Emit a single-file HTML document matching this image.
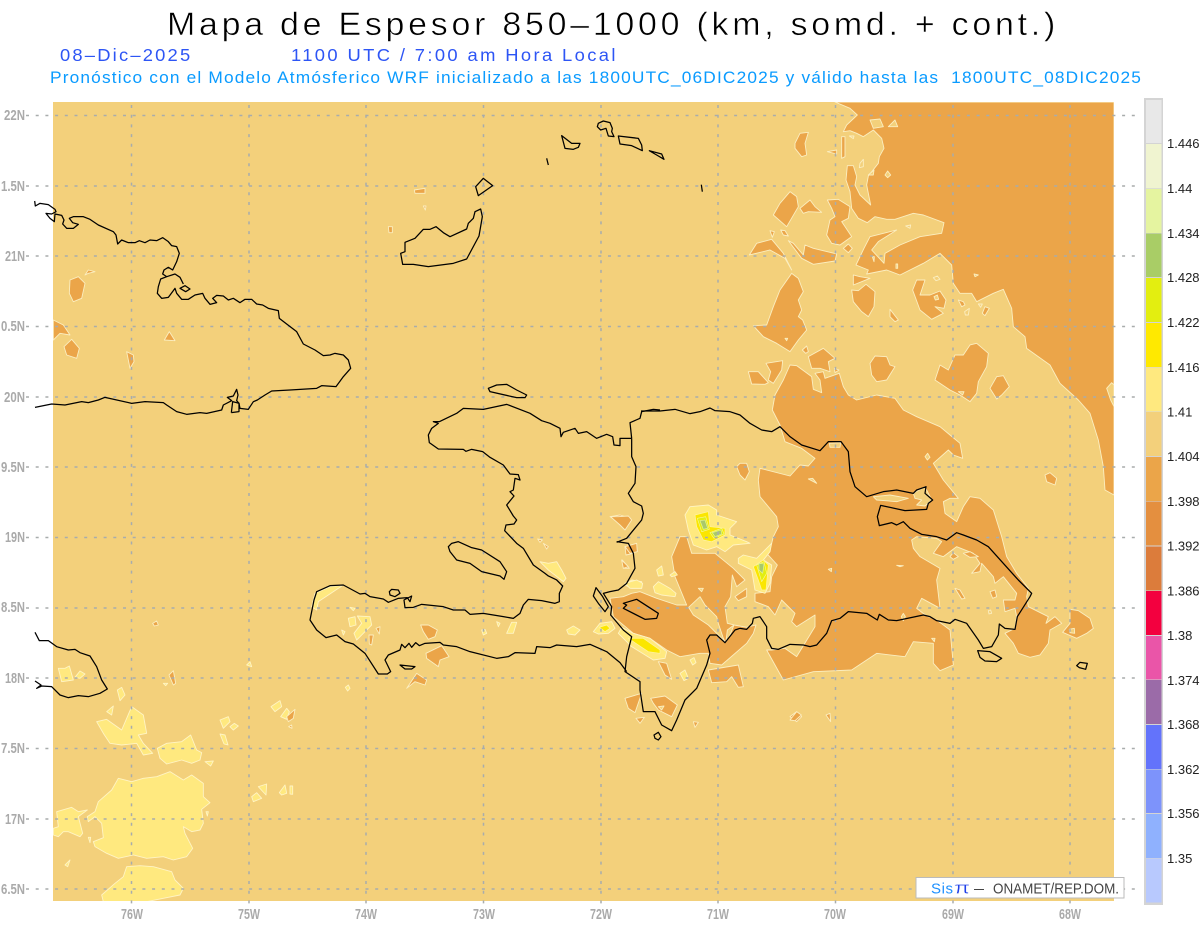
<!DOCTYPE html>
<html><head><meta charset="utf-8"><title>Mapa de Espesor</title>
<style>
html,body{margin:0;padding:0;background:#fff;width:1200px;height:927px;overflow:hidden}
svg{display:block;font-family:"Liberation Sans",sans-serif}
polygon,polyline,line,path{vector-effect:non-scaling-stroke;stroke-linejoin:round}
.dk polygon{fill:#eba549;stroke:#fbeec0;stroke-width:.9}
.lt polygon{fill:#f3d07b;stroke:#fbeec0;stroke-width:.9}
.yl polygon{fill:#ffe97f;stroke:#fff4c4;stroke-width:.9}
.dy polygon{fill:#fbe600;stroke:#fff4a0;stroke-width:.7}
.yg polygon{fill:#e3ee10;stroke:#f6f6a0;stroke-width:.6}
.gr polygon{fill:#a9c96a;stroke:#e5f4a0;stroke-width:.6}
.cs polyline,.cs polygon{fill:none;stroke:#000;stroke-width:1.25}
.grid line{stroke:#a8acac;stroke-width:1.5;stroke-dasharray:3 6.7}
.ax text{font-size:14.5px;font-weight:bold;fill:#aaa}
.cb text{font-size:13px;fill:#222}
</style></head><body>
<svg width="1200" height="927" viewBox="0 0 1200 927" xmlns="http://www.w3.org/2000/svg">
<defs><clipPath id="m"><rect x="53" y="102" width="1061" height="799"/></clipPath></defs>
<text transform="translate(167 35) scale(1.06 1)" font-size="32" textLength="838" lengthAdjust="spacing" fill="#000" stroke="#fff" stroke-width=".5">Mapa de Espesor 850–1000 (km, somd. + cont.)</text>
<text transform="translate(60 61) scale(1.05 1)" font-size="17.5" textLength="124" lengthAdjust="spacing" fill="#2d55f5">08–Dic–2025</text>
<text transform="translate(291 61) scale(1.05 1)" font-size="17.5" textLength="309" lengthAdjust="spacing" fill="#2d55f5">1100 UTC / 7:00 am Hora Local</text>
<text transform="translate(50 83) scale(1.05 1)" font-size="16.5" textLength="1039" lengthAdjust="spacing" fill="#0a9bff" xml:space="preserve">Pronóstico con el Modelo Atmósferico WRF inicializado a las 1800UTC_06DIC2025 y válido hasta las  1800UTC_08DIC2025</text>

<g clip-path="url(#m)">
<rect x="53" y="102" width="1061" height="799" fill="#f3d07b"/>

<!-- NE area (zoom 8 coordinates) -->
<g transform="translate(740 100) scale(.33333)">
<g class="dk">
<polygon points="285,6 330,25 352,45 320,75 310,95 330,92 350,100 370,110 400,90 425,115 432,145 418,170 415,190 385,228 380,255 392,315 360,285 345,255 350,230 340,197 322,197 318,240 330,275 335,325 355,355 382,368 405,350 440,358 465,358 520,340 550,345 612,368 605,400 540,410 480,435 435,460 432,490 395,450 415,425 470,390 390,410 372,445 348,495 385,510 380,522 440,510 480,525 550,490 600,460 635,495 640,550 660,580 695,580 710,605 760,580 790,568 815,625 820,680 855,710 860,745 930,795 960,850 1015,900 1050,940 1075,1020 1090,1100 1095,1170 1122,1185 1122,6"/>
<polygon points="165,130 180,100 205,97 195,130 200,165 185,170 165,145"/>
<polygon points="305,110 315,110 315,170 305,175"/>
<polygon points="262,155 290,150 290,162"/>
<polygon points="262,300 295,298 330,320 325,355 305,365 335,410 300,435 275,430 260,405 270,360 285,350 275,325"/>
<polygon points="150,275 170,290 175,320 140,380 100,345 120,310"/>
<polygon points="180,325 210,300 225,320 245,337 205,335 190,340"/>
<polygon points="28,465 50,430 95,418 130,460 155,510 135,475 90,450"/>
<polygon points="145,422 160,430 190,465 195,435 220,445 290,462 285,483 220,493 185,475"/>
<polygon points="90,392 103,395 97,412"/>
<polygon points="122,390 135,392 145,408 130,405"/>
<polygon points="310,445 325,432 337,445 325,458"/>
<polygon points="155,520 175,535 190,575 175,600 185,630 175,650 188,660 200,690 175,720 150,755 110,730 70,710 40,677 80,675 100,620 120,570"/>
<polygon points="340,525 360,530 390,535 365,545 340,555"/>
<polygon points="335,570 355,572 378,553 405,575 402,620 385,650 365,635 340,605"/>
<polygon points="450,628 475,660 465,665 450,650"/>
<polygon points="518,570 530,540 555,540 540,585 570,585 600,573 618,600 612,625 585,620 610,640 575,658 540,630"/>
<polygon points="390,790 405,768 440,770 450,795 465,800 440,840 410,845 395,825"/>
<polygon points="585,840 600,795 625,810 645,765 670,765 690,735 710,730 745,760 740,800 715,845 710,880 690,905 660,885 630,870"/>
<polygon points="750,865 770,830 790,827 808,860 785,885 770,897"/>
<polygon points="187,750 200,738 205,755 197,760"/>
<polygon points="205,770 250,745 285,775 265,785 270,815 240,805 215,805"/>
<polygon points="25,815 55,815 85,848 75,853 35,852"/>
<polygon points="78,790 128,782 125,810 100,850 85,840 92,815"/>
<polygon points="655,600 670,605 675,615 665,620"/>
<polygon points="735,620 748,625 735,647 727,640"/>
<polygon points="283,805 297,810 285,818"/>
<polygon points="285,895 300,890 302,905 290,910"/>
</g>
<g class="lt">
<polygon points="390,60 420,57 430,80 400,85"/>
<polygon points="445,80 465,60 473,80"/>
<polygon points="435,225 443,213 452,225 443,233"/>
<polygon points="497,378 512,375 510,385"/>
<polygon points="468,492 473,492 473,505 468,505"/>
<polygon points="397,470 403,470 402,485"/>
<polygon points="580,533 592,528 600,538 588,542"/>
<polygon points="582,590 592,585 596,598 586,600"/>
<polygon points="702,522 715,525 705,530"/>
<polygon points="360,190 370,178 370,200 358,203"/>
<polygon points="385,225 402,210 400,225"/>
<polygon points="328,108 342,108 340,116"/>
<polygon points="674,635 688,625 685,645 676,645"/>
<polygon points="715,612 727,612 722,622"/>
<polygon points="135,715 143,715 140,722"/>
<polygon points="655,875 672,875 668,885"/>
<polygon points="1100,865 1115,848 1122,855 1122,920 1112,900"/>
</g>
</g>

<!-- central dark (zoom 9 coordinates) -->
<g transform="translate(740 400) scale(.33333)">
<g class="dk">
<polygon points="97,30 105,-15 130,-60 150,-105 170,-103 215,-70 220,-32 245,-22 240,-60 225,-80 250,-85 255,-65 298,-80 310,-40 325,-15 350,0 410,-15 465,-5 490,30 530,50 600,80 630,105 660,130 668,175 640,165 625,150 580,190 610,240 655,295 630,295 610,305 615,340 650,365 670,320 690,290 720,295 760,330 785,410 800,470 830,520 865,565 860,590 865,620 925,650 918,670 945,650 965,670 930,690 925,730 900,765 870,772 835,760 820,730 795,700 825,685 830,650 825,625 795,635 790,600 825,600 830,580 790,530 765,550 760,530 725,490 720,515 695,520 720,490 700,460 650,440 610,470 580,460 605,425 590,415 530,410 515,420 520,445 540,470 600,505 590,540 600,625 545,595 530,625 560,648 590,660 630,690 640,795 600,812 580,790 580,730 520,725 495,770 410,760 335,810 220,815 130,840 80,750 95,750 135,745 170,770 225,680 225,645 170,680 155,665 165,640 125,600 105,645 85,620 45,605 45,580 90,575 95,530 112,495 80,460 95,430 100,410 115,380 110,350 60,290 55,240 60,205 150,228 180,195 205,198 225,175 185,145 135,125 120,75"/>
<polygon points="968,697 990,670 990,628 1015,632 1050,655 1060,685 1040,700 1010,715"/>
<polygon points="915,225 930,218 950,235 945,255 920,245"/>
<polygon points="0,190 20,190 28,215 15,240 0,225 -10,200"/>
<polygon points="150,950 170,935 185,950 170,965"/>
<polygon points="258,945 270,940 272,965"/>
<polygon points="645,565 660,570 675,595 665,597"/>
<polygon points="630,470 640,458 655,470 640,478"/>
<polygon points="670,460 690,455 715,470 690,472"/>
<polygon points="750,575 765,570 770,590 758,595"/>
</g>
<g class="lt">
<polygon points="400,290 450,285 505,295 470,305 410,300"/>
<polygon points="520,280 555,260 575,300 555,318 530,315 545,300 525,295"/>
<polygon points="268,130 302,128 300,142 270,142"/>
<polygon points="205,237 218,235 230,250"/>
<polygon points="470,496 490,497 480,500"/>
<polygon points="555,170 563,160 570,172 562,180"/>
<polygon points="484,650 490,640 496,650 490,662"/>
<polygon points="745,632 752,630 755,640 747,642"/>
<polygon points="988,688 1003,685 1004,700 990,698"/>
<polygon points="575,715 585,715 583,725"/>
<polygon points="265,508 275,505 274,515"/>
</g>
</g>

<!-- west-central (zoom 5 coordinates) -->
<g transform="translate(590 490) scale(.33333)">
<g class="dk">
<polygon points="245,200 270,140 290,140 305,190 375,190 430,235 465,270 440,290 427,255 422,320 405,350 412,400 432,405 470,412 498,405 490,430 470,460 395,525 360,520 355,490 330,490 270,500 230,480 180,445 130,430 70,380 60,325 100,320 125,310 150,305 200,325 260,345 290,345 255,260"/>
<polygon points="60,80 90,75 122,85 105,115 92,105 75,90"/>
<polygon points="105,170 140,165 130,190 108,195"/>
<polygon points="97,210 118,235 102,235"/>
<polygon points="205,515 230,520 245,568 225,555"/>
<polygon points="355,540 445,525 460,590 445,592 425,560 410,575 365,578"/>
<polygon points="105,625 155,610 135,668 115,655"/>
<polygon points="182,625 225,618 262,645 245,680 205,660 190,640"/>
<polygon points="138,685 163,682 150,700"/>
<polygon points="310,695 325,697 315,712"/>
<polygon points="600,690 620,665 634,675 615,692"/>
<polygon points="435,320 470,295 470,320 445,332"/>
</g>
<g class="lt">
<polygon points="296,352 330,320 345,345 380,380 385,400 400,445 405,455 390,440 355,405 310,375"/>
<polygon points="432,405 418,440 408,455 412,420"/>
<polygon points="325,295 340,295 335,305"/>
<polygon points="205,650 222,648 215,660"/>
</g>
<g class="yl">
<polygon points="285,75 300,50 355,45 380,60 380,75 440,95 420,115 420,135 470,155 480,160 430,165 405,185 380,170 350,180 310,165 295,120"/>
<polygon points="445,205 460,195 500,205 545,160 540,185 520,210 545,225 540,280 525,310 495,300 485,240 445,220"/>
<polygon points="10,425 30,400 65,395 75,415 55,430 25,432"/>
<polygon points="85,430 95,412 130,430 180,445 230,485 225,505 190,510 125,470"/>
<polygon points="105,285 125,270 155,275 155,295 125,295"/>
<polygon points="190,290 205,275 240,295 258,310 255,320 215,315 195,308"/>
<polygon points="200,240 215,228 220,255 205,258"/>
<polygon points="240,255 255,245 262,255 245,260"/>
<polygon points="300,510 312,503 318,518 308,525"/>
<polygon points="270,550 285,540 295,565 282,572"/>
</g>
<g class="dy">
<polygon points="315,75 355,65 360,110 405,115 405,135 365,155 340,150 320,110"/>
<polygon points="490,230 520,210 535,225 528,300 515,300 505,270"/>
<polygon points="28,412 50,405 60,415 45,425"/>
<polygon points="115,445 160,445 210,480 210,490 175,485"/>
</g>
<g class="yg">
<polygon points="322,85 347,80 358,118 335,125"/>
<polygon points="360,128 395,115 402,132 372,145"/>
<polygon points="500,225 522,215 530,250 515,275"/>
</g>
<g class="gr">
<polygon points="330,92 345,90 353,115 340,118"/>
<polygon points="367,128 393,120 395,132 375,140"/>
<polygon points="507,220 522,222 518,250 507,240"/>
</g>
</g>

<!-- Haiti area contours (zoom 7 coordinates) -->
<g transform="translate(300 370) scale(.33333)">
<g class="dk">
<polygon points="932,440 955,440 985,438 995,450 975,480 960,465"/>
<polygon points="975,530 1010,520 1012,545 990,550"/>
<polygon points="965,570 985,590 970,595"/>
<polygon points="362,765 385,765 412,780 405,800 385,808 370,785"/>
<polygon points="378,850 425,827 447,860 420,870 415,890 380,865"/>
<polygon points="320,955 350,910 380,930 375,945 345,935"/>
<polygon points="207,795 220,795 215,825 208,822"/>
<polygon points="228,775 240,770 238,792"/>
<polygon points="713,507 727,510 720,517"/>
<polygon points="730,520 745,530 740,537"/>
</g>
<g class="yl">
<polygon points="720,575 745,580 770,575 785,600 798,625 790,635 745,600"/>
<polygon points="45,670 90,650 130,645 85,675 55,695 50,720 35,710"/>
<polygon points="145,745 165,740 168,765 150,770"/>
<polygon points="172,738 210,740 215,765 190,790 170,810 162,790 185,760"/>
<polygon points="620,790 635,757 650,757 640,790"/>
<polygon points="545,780 555,778 560,790 550,795"/>
<polygon points="590,755 600,760 595,770"/>
<polygon points="800,780 820,768 840,780 825,795 805,792"/>
<polygon points="975,640 1010,630 1028,640 1025,655 990,655"/>
<polygon points="125,780 135,785 130,795"/>
<polygon points="150,712 165,715 160,722"/>
<polygon points="136,952 145,945 150,955 143,963"/>
</g>
</g>

<!-- SW contours (zoom 6 coordinates) -->
<g transform="translate(0 600) scale(.33333)">
<g class="yl">
<polygon points="335,570 355,535 395,545 430,535 470,530 510,515 550,540 575,525 610,550 610,590 630,608 605,628 610,670 600,690 575,695 550,680 555,700 578,745 560,770 520,780 490,770 440,775 400,765 355,775 320,760 285,740 280,725 310,713 305,670 285,650 265,665 262,650 285,635 295,605"/>
<polygon points="160,685 175,680 170,635 215,622 235,635 262,630 235,650 248,700 240,710 205,695 190,695 175,710 160,705"/>
<polygon points="305,885 345,850 370,830 380,800 420,797 460,800 515,815 525,840 550,865 540,885 490,895 440,905 310,905"/>
<polygon points="290,365 320,358 365,390 395,320 430,345 440,400 415,405 430,430 458,460 430,465 410,430 365,435 330,430 310,400"/>
<polygon points="472,445 500,430 545,425 572,405 590,450 605,458 600,480 575,490 545,480 500,492 480,475"/>
<polygon points="175,205 195,205 208,198 220,240 185,245"/>
<polygon points="225,232 240,213 255,222 240,235"/>
<polygon points="352,270 365,262 375,285 360,302"/>
<polygon points="320,335 340,318 335,345"/>
<polygon points="660,360 685,350 690,365 670,385"/>
<polygon points="690,380 703,370 715,378 700,390"/>
<polygon points="660,402 675,405 684,435 672,432"/>
<polygon points="755,590 770,578 785,595 760,605"/>
<polygon points="775,560 800,552 798,585"/>
<polygon points="838,578 855,555 860,580 845,585"/>
<polygon points="870,558 878,558 878,583 870,582"/>
<polygon points="813,320 840,302 845,320 825,335"/>
<polygon points="842,350 860,325 868,335 860,358"/>
<polygon points="615,485 640,483 632,498"/>
<polygon points="195,795 210,780 203,800"/>
<polygon points="740,195 750,185 755,200"/>
<polygon points="618,635 625,635 622,648"/>
<polygon points="265,712 272,712 270,728"/>
<polygon points="490,250 503,250 497,257"/>
</g>
<g class="dk">
<polygon points="507,225 520,212 527,250 520,255"/>
<polygon points="860,350 885,328 880,355 865,365"/>
<polygon points="458,70 470,63 475,75 463,78"/>
<polygon points="866,380 875,375 876,385"/>
</g>
</g>

<!-- W contours (zoom 10 coordinates) -->
<g transform="translate(20 190) scale(.33333)">
<g class="dk">
<polygon points="150,270 175,260 195,280 185,325 160,335 148,310"/>
<polygon points="195,255 205,240 225,245 205,250"/>
<polygon points="100,390 130,405 150,435 120,430 100,450"/>
<polygon points="132,470 155,448 178,475 170,505 140,495"/>
<polygon points="320,485 340,495 342,515 330,535"/>
<polygon points="433,450 448,425 465,452"/>
</g>
</g>
<!-- Bahamas contours (zoom 11 coordinates) -->
<g transform="translate(380 110) scale(.33333)">
<g class="dk">
<polygon points="103,240 135,235 135,250 105,250"/>
<polygon points="25,350 37,350 37,368 27,368"/>
<polygon points="130,288 138,288 136,300"/>
</g>
</g>
</g>

<!-- grid -->
<g class="grid">
<line x1="26" x2="1136" y1="115.5" y2="115.5"/>
<line x1="26" x2="1136" y1="186" y2="186"/>
<line x1="26" x2="1136" y1="256" y2="256"/>
<line x1="26" x2="1136" y1="326.5" y2="326.5"/>
<line x1="26" x2="1136" y1="397" y2="397"/>
<line x1="26" x2="1136" y1="467" y2="467"/>
<line x1="26" x2="1136" y1="537.5" y2="537.5"/>
<line x1="26" x2="1136" y1="608" y2="608"/>
<line x1="26" x2="1136" y1="678" y2="678"/>
<line x1="26" x2="1136" y1="748.5" y2="748.5"/>
<line x1="26" x2="1136" y1="819" y2="819"/>
<line x1="26" x2="1136" y1="889" y2="889"/>
<line x1="131.5" x2="131.5" y1="105" y2="906"/>
<line x1="249" x2="249" y1="105" y2="906"/>
<line x1="366" x2="366" y1="105" y2="906"/>
<line x1="483.5" x2="483.5" y1="105" y2="906"/>
<line x1="601" x2="601" y1="105" y2="906"/>
<line x1="718" x2="718" y1="105" y2="906"/>
<line x1="835.5" x2="835.5" y1="105" y2="906"/>
<line x1="953" x2="953" y1="105" y2="906"/>
<line x1="1070" x2="1070" y1="105" y2="906"/>
</g>

<!-- coast -->
<g class="cs">
<g transform="translate(20 190) scale(.33333)">
<polyline points="44,33 46,48 60,40 85,44 105,58 108,65 95,72 78,70 90,85 103,95 105,72 125,76 132,90 128,102 140,115 160,115 175,103 158,98 148,85 160,80 190,80 210,88 235,105 280,125 288,135 293,162 305,150 325,158 345,158 358,152 375,158 390,150 410,152 428,143 445,155 455,167 470,170 478,190 470,215 458,240 445,232 432,240 428,252 440,260 422,267 415,290 412,310 425,325 445,322 465,295 470,310 485,328 505,328 525,315 548,310 555,325 570,343 590,338 578,325 590,316 610,318 625,330 640,325 660,338 675,328 695,328 710,342 728,345 745,355 775,362 778,385 800,402 830,425 850,462 885,480 910,497 930,495 945,490 970,495 985,510 992,535 970,560 948,590 905,587 890,595 810,600 755,603 735,615 712,630 700,635 685,658 660,655 657,640 650,632 654,615 650,598 640,618 622,622 635,632 610,645 605,660 560,670 540,668 500,673 470,665 440,645 430,638 375,635 335,640 255,622 235,630 205,638 185,635 135,645 95,642 45,652"/>
<polyline points="440,260 465,252 480,262 490,282"/>
<polygon points="480,295 495,287 510,297 497,305"/>
<polyline points="634,668 638,635 657,640 657,665 634,668"/>
</g>
<g transform="translate(380 110) scale(.33333)">
<polygon points="75,397 105,385 130,358 150,358 168,350 190,368 210,380 260,357 265,340 280,325 285,305 302,297 307,320 297,378 260,447 220,460 145,470 100,463 68,463 62,430 75,425"/>
<polygon points="287,230 310,205 338,227 295,257"/>
<polygon points="545,77 575,100 600,100 595,112 580,118 555,115"/>
<polyline points="500,145 505,165"/>
<polygon points="655,40 670,33 690,38 697,55 695,65 702,80 685,78 678,55 662,60 652,50"/>
<polygon points="715,78 775,85 785,105 787,122 755,107 720,102"/>
<polygon points="808,122 845,132 852,148 830,135"/>
<polyline points="964,224 967,245"/>
</g>
<g transform="translate(0 600) scale(.33333)">
<polyline points="105,97 118,122 145,122 170,140 205,150 225,148 240,158 270,168 290,200 305,240 322,267 300,280 265,290 235,287 205,293 180,285 155,260 125,258 110,265 123,255 105,243"/>
</g>
<g transform="translate(300 370) scale(.33333)">
<polyline points="995,205 990,158 1020,145 1025,125 1060,118 1080,120"/>
<polyline points="995,205 960,205 960,227 942,225 938,200 920,193 890,205 860,185 835,190 825,175 790,187 783,200 780,175 750,160 725,152 690,130 620,103 550,118 490,115 470,130 418,155 400,155 415,160 395,175 385,195 388,218 415,237 490,238 498,244 515,238 548,245 570,262 610,285 630,312 655,314 660,330 645,325 640,360 630,365 642,378 620,405 640,438 650,450 642,462 618,465 614,482 650,520 670,535 700,585 735,610 745,618 770,630 788,648 778,670 778,695 765,700 725,692 685,688 670,705 660,730 640,745 610,740 550,730 510,733 495,720 460,720 430,710 365,703 340,712 315,713 312,690 335,678 330,695 322,683 295,685 265,697 250,687 210,680 195,670 180,672 130,645 90,647 50,665 42,690 30,750 50,780 78,803 110,795 135,815 160,822 195,850 235,912 262,912 272,905 255,870 265,855 300,840 305,823 315,833 327,820 335,832 347,818 358,827 375,820 420,817 430,825 470,830 510,845 590,865 625,860 645,848 705,850 710,830 750,833 770,825 830,830 870,823 920,845 960,878 980,905"/>
<polyline points="995,205 995,260 1008,290 1005,340 985,370 1000,395 1025,408 1030,430 1025,450 980,505 950,517"/>
<polygon points="445,530 455,520 475,515 515,533 545,540 600,575 620,605 612,628 600,618 545,605 510,580 470,570 450,545"/>
<polygon points="565,55 590,45 620,43 650,60 680,75 675,83 650,83 570,65"/>
<polygon points="268,665 275,658 295,660 300,670 285,680 270,675"/>
<polygon points="300,885 345,890 335,897 315,897"/>
</g>
<g transform="translate(590 490) scale(.33333)">
<polyline points="80,155 115,160 130,190 135,235 110,280 85,300 60,305 40,310 65,350 62,375 100,420 125,440 110,500 105,545 150,575 150,600 160,665 195,665 215,705 245,722 260,690 285,630 320,595 350,525 360,490 350,450 360,435 380,435 405,458 435,420 450,415"/>
<polygon points="100,340 140,328 205,370 200,385 165,388 100,355 110,345"/>
<polygon points="18,293 10,318 25,340 45,365 55,350 38,320"/>
<polygon points="192,735 205,727 213,740 205,750 195,745"/>
</g>
<g transform="translate(740 400) scale(.33333)">
<polyline points="0,685 20,688 37,670 40,655 60,650 80,680 80,715 95,745 115,748 150,733 190,735 210,740 230,735 260,700 275,662 300,655 325,635 380,640 412,660 418,643 445,660 470,662 550,645 570,650 590,662 630,670 645,658 680,670 715,720 730,745 755,740 775,705 778,672 795,685 825,688 832,650 870,590 875,580 835,540 745,440 710,420 670,405 650,398 620,420 590,410 545,403 510,385 490,365 470,375 455,368 418,377 412,350 422,316 495,332 560,328 565,310 578,300 555,280 558,260 530,270 520,280 470,270 430,275 380,290 345,260 330,215 325,155 303,125 265,125 240,152 185,135 150,110 120,80 95,95 65,90 30,70 0,45 -30,35 -75,32 -90,24 -120,35 -150,41 -195,28 -240,33 -297,33"/>
<polygon points="713,752 750,755 785,775 770,785 735,783 720,772"/>
<polygon points="1010,797 1020,787 1042,790 1037,808 1018,803"/>
</g>
</g>

<!-- axis labels -->
<g class="ax">
<text x="4" y="120" textLength="21" lengthAdjust="spacingAndGlyphs">22N</text>
<text x="1" y="191" textLength="24" lengthAdjust="spacingAndGlyphs">1.5N</text>
<text x="5" y="261" textLength="20" lengthAdjust="spacingAndGlyphs">21N</text>
<text x="1" y="331" textLength="24" lengthAdjust="spacingAndGlyphs">0.5N</text>
<text x="4" y="402" textLength="21" lengthAdjust="spacingAndGlyphs">20N</text>
<text x="1" y="472" textLength="24" lengthAdjust="spacingAndGlyphs">9.5N</text>
<text x="5" y="542" textLength="20" lengthAdjust="spacingAndGlyphs">19N</text>
<text x="1" y="612" textLength="24" lengthAdjust="spacingAndGlyphs">8.5N</text>
<text x="5" y="683" textLength="20" lengthAdjust="spacingAndGlyphs">18N</text>
<text x="1" y="753" textLength="24" lengthAdjust="spacingAndGlyphs">7.5N</text>
<text x="5" y="824" textLength="20" lengthAdjust="spacingAndGlyphs">17N</text>
<text x="1" y="894" textLength="24" lengthAdjust="spacingAndGlyphs">6.5N</text>
<text x="121" y="919" textLength="22" lengthAdjust="spacingAndGlyphs">76W</text>
<text x="238" y="919" textLength="22" lengthAdjust="spacingAndGlyphs">75W</text>
<text x="355" y="919" textLength="22" lengthAdjust="spacingAndGlyphs">74W</text>
<text x="473" y="919" textLength="22" lengthAdjust="spacingAndGlyphs">73W</text>
<text x="590" y="919" textLength="22" lengthAdjust="spacingAndGlyphs">72W</text>
<text x="707" y="919" textLength="22" lengthAdjust="spacingAndGlyphs">71W</text>
<text x="824" y="919" textLength="22" lengthAdjust="spacingAndGlyphs">70W</text>
<text x="942" y="919" textLength="22" lengthAdjust="spacingAndGlyphs">69W</text>
<text x="1059" y="919" textLength="22" lengthAdjust="spacingAndGlyphs">68W</text>
</g>

<!-- logo box -->
<rect x="916" y="877.5" width="208" height="20.5" fill="#fff" stroke="#bbb" stroke-width="1"/>
<text x="931" y="893.5" font-size="15" fill="#1e90ff" textLength="22">Sis</text>
<text x="954" y="893.5" font-size="17" fill="#2040e8" stroke="#fff" stroke-width=".3" textLength="16" lengthAdjust="spacingAndGlyphs">π</text>
<text x="974" y="893.5" font-size="15" fill="#444" textLength="10" lengthAdjust="spacingAndGlyphs">–</text>
<text x="993" y="893.5" font-size="14.5" fill="#444" textLength="126" lengthAdjust="spacingAndGlyphs">ONAMET/REP.DOM.</text>

<!-- colorbar -->
<rect x="1144" y="98" width="19" height="807" fill="#d4d4d4"/>
<g>
<rect x="1146" y="100" width="15.500" height="43" fill="#e8e8e8"/>
<rect x="1146" y="144" width="15.500" height="44.300" fill="#f0f4d0"/>
<rect x="1146" y="189" width="15.500" height="44" fill="#e5f4a0"/>
<rect x="1146" y="233.500" width="15.500" height="43.500" fill="#a9cd66"/>
<rect x="1146" y="278" width="15.500" height="44" fill="#e3ee10"/>
<rect x="1146" y="323" width="15.500" height="44" fill="#ffe900"/>
<rect x="1146" y="367.500" width="15.500" height="44" fill="#ffe97f"/>
<rect x="1146" y="412" width="15.500" height="44" fill="#f3d07b"/>
<rect x="1146" y="457" width="15.500" height="44" fill="#eba549"/>
<rect x="1146" y="501.500" width="15.500" height="44" fill="#e48f3f"/>
<rect x="1146" y="546.500" width="15.500" height="44" fill="#dc7c3b"/>
<rect x="1146" y="591" width="15.500" height="44" fill="#f3003f"/>
<rect x="1146" y="636" width="15.500" height="43.500" fill="#ea55a8"/>
<rect x="1146" y="680" width="15.500" height="44" fill="#9b6ba8"/>
<rect x="1146" y="725" width="15.500" height="44" fill="#6373fb"/>
<rect x="1146" y="769.500" width="15.500" height="43.500" fill="#7d93fb"/>
<rect x="1146" y="814" width="15.500" height="44" fill="#8fb1fe"/>
<rect x="1146" y="858.500" width="15.500" height="44" fill="#b8c9fe"/>
</g>
<g class="cb">
<text x="1167" y="148">1.446</text>
<text x="1167" y="193">1.44</text>
<text x="1167" y="238">1.434</text>
<text x="1167" y="282">1.428</text>
<text x="1167" y="327">1.422</text>
<text x="1167" y="372">1.416</text>
<text x="1167" y="416.500">1.41</text>
<text x="1167" y="461">1.404</text>
<text x="1167" y="506">1.398</text>
<text x="1167" y="550.500">1.392</text>
<text x="1167" y="595.500">1.386</text>
<text x="1167" y="640">1.38</text>
<text x="1167" y="685">1.374</text>
<text x="1167" y="729">1.368</text>
<text x="1167" y="774">1.362</text>
<text x="1167" y="818">1.356</text>
<text x="1167" y="863">1.35</text>
</g>
</svg>
</body></html>
